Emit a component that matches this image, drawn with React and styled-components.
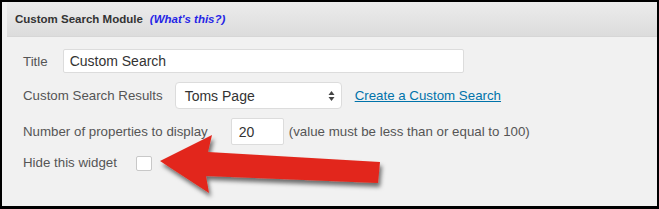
import styled, { createGlobalStyle } from "styled-components"

const GlobalStyle = createGlobalStyle`
    * { box-sizing: border-box; }
    body {
        margin: 0;
        background: #000;
        font-family: "Liberation Sans", Arial, sans-serif;
    }
`

const Page = styled.div`
    position: relative;
    width: 659px;
    height: 209px;
`
const Frame = styled.div`
    width: 659px;
    height: 209px;
    border: 2px solid #000;
    border-bottom-width: 3px;
    background: #f1f1f1;
    display: flex;
    flex-direction: column;
`
const Header = styled.div`
    margin-left: 5px;
    height: 35px;
    display: flex;
    align-items: center;
    padding-left: 8px;
    background: linear-gradient(#ececec, #dcdcdc);
    border-bottom: 1px solid #d6d6d6;
    font-size: 11.5px;
    font-weight: 700;
    color: #333;
    > em {
        margin-left: 7px;
        color: #2424e6;
        font-style: italic;
    }
`
const Body = styled.div`
    display: flex;
    flex-direction: column;
    gap: 9px;
    padding: 12px 0 0 21px;
    font-size: 13.3px;
    color: #555;
`
const Row = styled.div`
    display: flex;
    align-items: center;
    gap: ${p => p.gap}px;
`
const TextInput = styled.div`
    width: ${p => p.width}px;
    height: ${p => p.height}px;
    background: #fff;
    border: 1px solid #dcdcdc;
    border-radius: 2px;
    display: flex;
    align-items: center;
    padding-left: ${p => p.pad}px;
    font-size: 14px;
    color: #333;
`
const Select = styled.div`
    width: 167px;
    height: 27px;
    background: #fff;
    border: 1px solid #dcdcdc;
    border-radius: 4px;
    display: flex;
    align-items: center;
    justify-content: space-between;
    padding: 0 6px 0 9px;
    font-size: 14px;
    color: #333;
`
const Link = styled.a`
    color: #0073aa;
    text-decoration: underline;
    margin-left: 1px;
`
const Check = styled.div`
    width: 16px;
    height: 15px;
    margin-top: 2px;
    background: #fff;
    border: 1px solid #c8c8c8;
    border-radius: 2px;
`
const Overlay = styled.svg`
    position: absolute;
    left: 0;
    top: 0;
    pointer-events: none;
`

export default function App() {
    return (
        <Page>
            <GlobalStyle />
            <Frame>
                <Header>
                    Custom Search Module <em>(What's this?)</em>
                </Header>
                <Body>
                    <Row gap={15}>
                        <span>Title</span>
                        <TextInput width={401} height={24} pad={6}>Custom Search</TextInput>
                    </Row>
                    <Row gap={12}>
                        <span>Custom Search Results</span>
                        <Select>
                            Toms Page
                            <svg width="7" height="12" viewBox="0 0 7 12">
                                <path d="M3.5 1 L6.5 5 L0.5 5 Z M3.5 11 L6.5 7 L0.5 7 Z" fill="#444" />
                            </svg>
                        </Select>
                        <Link>Create a Custom Search</Link>
                    </Row>
                    <Row gap={23}>
                        <span>Number of properties to display</span>
                        <Row gap={5}>
                            <TextInput width={53} height={27} pad={7}>20</TextInput>
                            <span>(value must be less than or equal to 100)</span>
                        </Row>
                    </Row>
                    <Row gap={19}>
                        <span>Hide this widget</span>
                        <Check />
                    </Row>
                </Body>
            </Frame>
            <Overlay width="659" height="209" viewBox="0 0 659 209">
                <defs>
                    <filter id="sh" x="-10%" y="-20%" width="130%" height="150%">
                        <feDropShadow dx="2" dy="4" stdDeviation="2" floodColor="#000" floodOpacity="0.55" />
                    </filter>
                </defs>
                <polygon
                    points="160,161 212,135 208,152 380,162 378,183 206,176 209,193"
                    fill="#e2271b"
                    filter="url(#sh)"
                />
            </Overlay>
        </Page>
    )
}
